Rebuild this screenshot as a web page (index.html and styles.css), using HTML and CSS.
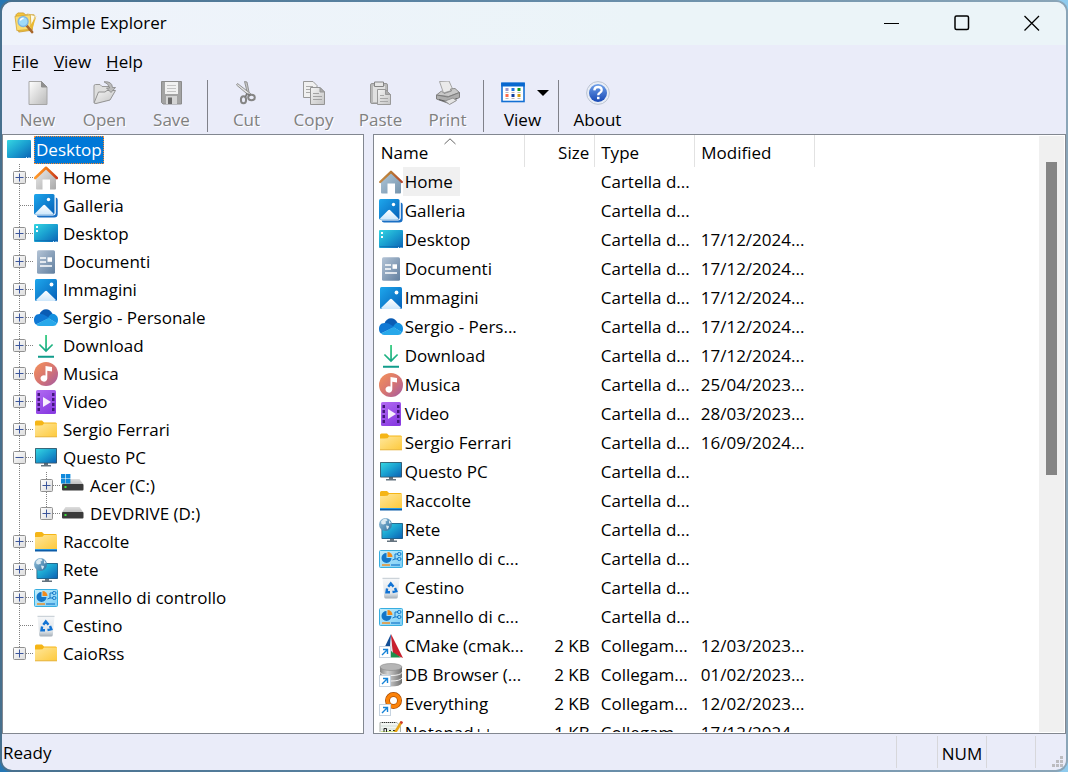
FILE: index.html
```html
<!DOCTYPE html>
<html lang="en">
<head>
<meta charset="utf-8">
<title>Simple Explorer</title>
<link rel="stylesheet" href="styles.css">
</head>
<body>
<svg class="sprite" aria-hidden="true">
  <defs>
    <linearGradient id="g-roof" x1="0" x2="1"><stop offset="0" stop-color="#ff9a2e"/><stop offset=".5" stop-color="#f07818"/><stop offset="1" stop-color="#c9391c"/></linearGradient>
    <linearGradient id="g-roof2" x1="0" x2="1"><stop offset="0" stop-color="#c58a45"/><stop offset=".5" stop-color="#b87a35"/><stop offset="1" stop-color="#b5472c"/></linearGradient>
    <linearGradient id="g-wall" x1="0" x2="1" y2="1"><stop offset="0" stop-color="#ececec"/><stop offset="1" stop-color="#a8a8a8"/></linearGradient>
    <linearGradient id="g-wall2" x1="0" x2="1" y2="1"><stop offset="0" stop-color="#b0c8da"/><stop offset="1" stop-color="#7694ac"/></linearGradient>
    <linearGradient id="g-blue" x1="0" x2="1" y2="1"><stop offset="0" stop-color="#1ea7ec"/><stop offset="1" stop-color="#0560b8"/></linearGradient>
    <linearGradient id="g-snow" x2="0" y2="1"><stop offset="0" stop-color="#fff"/><stop offset="1" stop-color="#cfe8fb"/></linearGradient>
    <linearGradient id="g-desk" x1="0" x2="1" y2="1"><stop offset="0" stop-color="#35d6e2"/><stop offset=".5" stop-color="#1a9fd0"/><stop offset="1" stop-color="#0b62b4"/></linearGradient>
    <linearGradient id="g-doc" x1="0" x2="1" y2="1"><stop offset="0" stop-color="#b4c4d6"/><stop offset="1" stop-color="#617f9f"/></linearGradient>
    <linearGradient id="g-down" x2="0" y2="1"><stop offset="0" stop-color="#2ccb78"/><stop offset="1" stop-color="#109a8c"/></linearGradient>
    <linearGradient id="g-music" x1="0" x2="1" y2="1"><stop offset="0" stop-color="#f5935a"/><stop offset=".5" stop-color="#d87670"/><stop offset="1" stop-color="#a25aa4"/></linearGradient>
    <linearGradient id="g-video" x1="0" x2=".6" y2="1"><stop offset="0" stop-color="#b26cf2"/><stop offset="1" stop-color="#8a3ce2"/></linearGradient>
    <linearGradient id="g-fold" x1="0" x2="1" y2="1"><stop offset="0" stop-color="#ffe79b"/><stop offset="1" stop-color="#fdc93c"/></linearGradient>
    <linearGradient id="g-globe" x1="0" x2="1" y2="1"><stop offset="0" stop-color="#9cc4dd"/><stop offset="1" stop-color="#2a6f9f"/></linearGradient>
    <linearGradient id="g-panel" x1="0" x2="1" y2="1"><stop offset="0" stop-color="#c2eefc"/><stop offset="1" stop-color="#7ccdf5"/></linearGradient>
    <linearGradient id="g-bin" x2="0" y2="1"><stop offset="0" stop-color="#f6f8fa"/><stop offset=".75" stop-color="#dfe4e8"/><stop offset="1" stop-color="#a3aeb8"/></linearGradient>
    <linearGradient id="g-drive" x2="0" y2="1"><stop offset="0" stop-color="#dedede"/><stop offset="1" stop-color="#bdbdbd"/></linearGradient>
    <linearGradient id="g-cyl" x1="0" x2="1"><stop offset="0" stop-color="#858585"/><stop offset=".35" stop-color="#d2d2d2"/><stop offset="1" stop-color="#707070"/></linearGradient>
    <linearGradient id="g-page" x1="0" x2="1" y2="1"><stop offset="0" stop-color="#fff"/><stop offset="1" stop-color="#b9b9b9"/></linearGradient>
    <linearGradient id="g-gray" x1="0" x2="1" y2="1"><stop offset="0" stop-color="#f4f4f4"/><stop offset="1" stop-color="#c4c4c4"/></linearGradient>
    <linearGradient id="g-help" x2="0" y2="1"><stop offset="0" stop-color="#6fa0ea"/><stop offset="1" stop-color="#1748b4"/></linearGradient>
    <linearGradient id="g-box" x1="0" x2="1" y2="1"><stop offset="0" stop-color="#fff"/><stop offset="1" stop-color="#dcdcdc"/></linearGradient>
  </defs>

  <symbol id="t-plus" viewBox="0 0 27 28">
    <path d="M12.5 0v28M19 13.5h8" class="dots"/>
    <rect x="6.5" y="7.5" width="12" height="12" rx="1" fill="url(#g-box)" stroke="#919191"/>
    <path d="M8.500 13.500h8M12.500 9.500v8" stroke="#3b559b"/>
  </symbol>
  <symbol id="t-minus" viewBox="0 0 27 28">
    <path d="M12.5 0v28M19 13.5h8" class="dots"/>
    <rect x="6.5" y="7.5" width="12" height="12" rx="1" fill="url(#g-box)" stroke="#919191"/>
    <path d="M8.500 13.500h8" stroke="#3b559b"/>
  </symbol>
  <symbol id="t-last" viewBox="0 0 27 28">
    <path d="M12.5 0v8M19 13.5h8" class="dots"/>
    <rect x="6.5" y="7.5" width="12" height="12" rx="1" fill="url(#g-box)" stroke="#919191"/>
    <path d="M8.500 13.500h8M12.500 9.500v8" stroke="#3b559b"/>
  </symbol>
  <symbol id="t-tee" viewBox="0 0 27 28"><path d="M12.5 0v28M13 13.5h14" class="dots"/></symbol>
  <symbol id="t-bar" viewBox="0 0 27 28"><path d="M12.5 0v28" class="dots"/></symbol>

  <symbol id="i-home" viewBox="0 0 24 24">
    <path d="M2 12L12 2.500l10 9.500v10.500a1 1 0 0 1-1 1h-5V13.500H8.500v10H3a1 1 0 0 1-1-1z" fill="url(#g-wall)"/>
    <path d="M1.200 12L12 1.800 22.800 12" fill="none" stroke="url(#g-roof)" stroke-width="2.600" stroke-linecap="round" stroke-linejoin="round"/>
  </symbol>
  <symbol id="i-home-sel" viewBox="0 0 24 24">
    <path d="M2 12L12 2.500l10 9.500v10.500a1 1 0 0 1-1 1h-5V13.500H8.500v10H3a1 1 0 0 1-1-1z" fill="url(#g-wall2)"/>
    <path d="M1.200 12L12 1.800 22.800 12" fill="none" stroke="url(#g-roof2)" stroke-width="2.400" stroke-linecap="round" stroke-linejoin="round"/>
  </symbol>
  <symbol id="i-gallery" viewBox="0 0 24 24">
    <path d="M21.800 3.500q1.900.4 1.900 2.300V20q0 3.500-3.500 3.500H5q-1.800 0-2.500-1.900H18.800q3 0 3-3z" fill="#1a6fc4"/>
    <rect x="0" y="0" width="20.500" height="20.500" rx="1.500" fill="url(#g-blue)"/>
    <path d="M1 19.500l8.200-8.200q1-1 2 0l8.300 8.200q-.4 1-1.500 1H2.500q-1 0-1.500-1z" fill="url(#g-snow)"/>
    <circle cx="14.500" cy="5.500" r="1.700" fill="#fff"/>
  </symbol>
  <symbol id="i-desk" viewBox="0 0 24 24">
    <rect y="2" width="24" height="18" rx="1" fill="url(#g-desk)"/>
    <path d="M1 18.500h22" stroke="#0a5ea8" stroke-opacity=".5"/>
    <path d="M2 4h2v2H2zM2 8h2v2H2z" fill="#fff"/><path d="M19 19h1v1h-1zM21.500 19h1v1h-1z" fill="#bfe6ff"/>
  </symbol>
  <symbol id="i-root" viewBox="0 0 24 24">
    <rect y="2" width="24" height="18" rx="1" fill="url(#g-desk)"/><path d="M19 19h1v1h-1zM21.500 19h1v1h-1z" fill="#bfe6ff"/>
  </symbol>
  <symbol id="i-doc" viewBox="0 0 24 24">
    <rect x="3" y=".3" width="18" height="23.500" rx="1.500" fill="url(#g-doc)"/>
    <path d="M6 8h6M6 12h6M6 16h12" stroke="#fff" stroke-width="1.400"/><rect x="13.500" y="7.300" width="4.500" height="4.500" fill="#fff"/>
  </symbol>
  <symbol id="i-pic" viewBox="0 0 24 24">
    <rect x="1" y="1" width="22" height="22" rx="1.500" fill="url(#g-blue)"/>
    <path d="M2 22l9-8.800q1-1 2 0L22 22q-.5.900-1.500.900h-17q-1 0-1.500-.9z" fill="url(#g-snow)"/>
    <circle cx="17.500" cy="6.500" r="1.900" fill="#fff"/>
  </symbol>
  <symbol id="i-cloud" viewBox="0 0 24 24">
    <path d="M5.500 8.500C7 2 16 1 18.500 8l-4 5z" fill="#0a5cb4"/>
    <path d="M5.500 8C1.500 8 0 11 0 14c0 2 .8 3.500 2 4.500L15.500 12 9.500 8.500Q7.500 7.600 5.500 8z" fill="#0f78d4"/>
    <path d="M18.500 7.800c3.500.2 5.500 2.800 5.500 6.200q0 2-1 3.500L14 12q1.800-4 4.500-4.200z" fill="#1490df"/>
    <path d="M2 18.500L14.500 12l8.600 5.500q-1.300 2.500-4.100 2.500H5.500Q3.500 20 2 18.500z" fill="#28a8ea"/>
  </symbol>
  <symbol id="i-down" viewBox="0 0 24 24">
    <path d="M11.200 1h1.700v14l5.100-5.100 1.200 1.200-7.200 7.200-7.200-7.200L6 9.900l5.200 5.100zM4 21.700h16v2H4z" fill="url(#g-down)"/>
  </symbol>
  <symbol id="i-music" viewBox="0 0 24 24">
    <circle cx="12" cy="12" r="12" fill="url(#g-music)"/>
    <path d="M11.500 4l6.500 1v4.500l-4.700-.8V16.500a3.400 3.200 0 1 1-1.800-2.900z" fill="#fff"/>
  </symbol>
  <symbol id="i-video" viewBox="0 0 24 24">
    <rect x="2" width="20" height="24" rx="1.500" fill="url(#g-video)"/>
    <path d="M3.500 3h2.500v3H3.500zM3.500 8h2.500v3H3.500zM3.500 13h2.500v3H3.500zM3.500 18h2.500v3H3.500zM18 3h2.500v3H18zM18 8h2.500v3H18zM18 13h2.500v3H18zM18 18h2.500v3H18z" fill="#43167c"/>
    <path d="M9 7l8 5-8 5z" fill="#f6effd"/>
  </symbol>
  <symbol id="i-folder" viewBox="0 0 24 24">
    <path d="M1 4q0-1.500 1.500-1.500H8l2 2H21.500Q23 4.500 23 6v8H1z" fill="#f5b516"/>
    <path d="M1 7.500q4.500 0 7.500-.2L10 5.500h13V19H1z" fill="url(#g-fold)"/><path d="M1 18.800h22" stroke="#e6b545"/>
  </symbol>
  <symbol id="i-lib" viewBox="0 0 24 24">
    <path d="M1 3.500Q1 2 2.500 2H8l2 2H21.500Q23 4 23 5.500v8H1z" fill="#f5b516"/>
    <path d="M1 7q4.500 0 7.500-.2L10 5h13V19H1z" fill="url(#g-fold)"/><path d="M1 19h22v2.500H1z" fill="#0c5ca8"/><path d="M1 19h22v1H1z" fill="#2a9be4"/>
  </symbol>
  <symbol id="i-pc" viewBox="0 0 24 24">
    <path d="M10 16h4v3h3v1.500H7V19h3z" fill="#64737f"/>
    <rect x="1" y="2" width="22" height="15.500" rx=".8" fill="#3a5263"/><rect x="1.800" y="2.800" width="20.400" height="13.900" fill="url(#g-desk)"/>
  </symbol>
  <symbol id="i-drive" viewBox="0 0 24 24">
    <path d="M4.500 5h14l4 5.500H1z" fill="url(#g-drive)"/><rect x="1" y="10" width="21.500" height="6.500" rx="1" fill="#3a3a3a"/><rect x="3.500" y="12" width="2" height="2" fill="#3be03b"/>
  </symbol>
  <symbol id="i-windrive" viewBox="0 0 24 24">
    <path d="M4.500 5h14l4 5.500H1z" fill="url(#g-drive)"/><rect x="1" y="10" width="21.500" height="6.500" rx="1" fill="#3a3a3a"/><rect x="3.500" y="12" width="2" height="2" fill="#3be03b"/>
    <path d="M0 0h4.400v4.400H0zM5 0h4.400v4.400H5zM0 5h4.400v4.400H0zM5 5h4.400v4.400H5z" fill="#1089dc"/>
  </symbol>
  <symbol id="i-net" viewBox="0 0 24 24">
    <path d="M11 20h4v2.500h3V24H8v-1.500h3z" fill="#64737f"/>
    <rect x="2.500" y="5" width="21.500" height="16" rx=".8" fill="#245c80"/><rect x="3.300" y="5.800" width="19.900" height="14.400" fill="url(#g-desk)"/>
    <circle cx="6.500" cy="6.500" r="6.500" fill="url(#g-globe)"/>
    <path d="M2 3.500q2-3 5-3l1.500 2-2 1 .5 2-2.500 1-2-.5zM7 7.500l3 .5-.5 2-1.500 1.500zM10 2l2 3-2 .5z" fill="#dceaf2"/>
  </symbol>
  <symbol id="i-cpl" viewBox="0 0 24 24">
    <rect x=".5" y="3.500" width="23" height="17" rx="1" fill="url(#g-panel)" stroke="#38aee0"/>
    <path d="M7.500 6v5h5a5 5 0 1 1-5-5z" fill="#1376c8"/><path d="M8.500 5a5 5 0 0 1 5 5h-5z" fill="#f28b1c"/>
    <path d="M13.500 13l2.500-1V7h3M16 12h3" fill="none" stroke="#1376c8"/><rect x="18.500" y="5.500" width="3.500" height="3" rx="1.500" fill="none" stroke="#1376c8"/><rect x="18.500" y="10.500" width="3.500" height="3" rx="1.500" fill="none" stroke="#1376c8"/>
    <path d="M3 18h8" stroke="#f28b1c" stroke-width="1.400"/><path d="M12 18h9" stroke="#2a86d0" stroke-width="1.400"/>
  </symbol>
  <symbol id="i-bin" viewBox="0 0 24 24">
    <path d="M3.500 2h17L18.800 21q-.2 1.500-1.700 1.500H6.900q-1.500 0-1.700-1.500z" fill="url(#g-bin)"/><path d="M3.500 2.300h17" stroke="#c2cad1"/>
    <path d="M9.300 10.800l2.500-3.300 2.700 3.300M16 12l1.300 3.200-3.800.8M11 16.300H7.500l.6-3.800" fill="none" stroke="#1173d4" stroke-width="2.400"/>
  </symbol>
  <symbol id="i-link" viewBox="0 0 24 24">
    <rect x=".5" y="12.500" width="11" height="11" fill="#fff" stroke="#c6d3e0"/>
    <path d="M3 21l5-5M4 15.500h4.500V20" fill="none" stroke="#1583d8" stroke-width="1.400"/>
  </symbol>
  <symbol id="i-cmake" viewBox="0 0 24 24">
    <path d="M12 0L1 23l10-8.500z" fill="#134f96"/><path d="M12 0l12 24-11-4.500z" fill="#c8202e"/><path d="M1 23.500l10.500-7L22 23.500z" fill="#1d8f4c"/><path d="M12 4l-.8 11 2.800 4z" fill="#e4e6ea"/><use href="#i-link"/>
  </symbol>
  <symbol id="i-db" viewBox="0 0 24 24">
    <path d="M1 4v16q2 3.500 11 3.500T23 20V4z" fill="url(#g-cyl)"/><ellipse cx="12" cy="4" rx="11" ry="3.500" fill="#b5b5b5" stroke="#8a8a8a" stroke-width=".6"/>
    <path d="M1 9.500q2 3 11 3t11-3M1 15q2 3 11 3t11-3" fill="none" stroke="#f4f4f4"/><use href="#i-link"/>
  </symbol>
  <symbol id="i-every" viewBox="0 0 24 24">
    <path d="M9 13l-6 8" stroke="#ef7700" stroke-width="4"/><circle cx="14.500" cy="8.500" r="6" fill="#fff" stroke="#a84e06" stroke-width="5"/><circle cx="14.500" cy="8.500" r="6" fill="none" stroke="#fb8209" stroke-width="3.500"/><use href="#i-link"/>
  </symbol>
  <symbol id="i-npp" viewBox="0 0 24 24">
    <path d="M1 1.500h17l3.500 4V24H1z" fill="#f2f5f2" stroke="#a9afa9"/><path d="M3 1.500h14" stroke="#333" stroke-dasharray="1 1"/><path d="M2 5h17M2 8h17" stroke="#b9cfc2" stroke-width=".6"/>
    <path d="M2 10h14v5H2z" fill="#cfe88a"/><path d="M5 13V7.500h2.500V13M10 9.500h2M14 9.500h2" fill="none" stroke="#222"/><path d="M22.500 1l-8 13" stroke="#e8a312" stroke-width="2.600"/><path d="M23 .5l-1.200 2" stroke="#d03a30" stroke-width="2.600"/>
  </symbol>

  <symbol id="b-new" viewBox="0 0 24 24"><path d="M3 .5h12.500L21 6v17.500H3z" fill="url(#g-page)" stroke="#a6a6a6"/><path d="M15.500.5V6H21z" fill="#8f8f8f" stroke="#8f8f8f"/></symbol>
  <symbol id="b-open" viewBox="0 0 24 24">
    <path d="M1 21.500V5q0-1.500 1.500-1.500H7l2 2h7.500v6" fill="#dedede" stroke="#999"/>
    <path d="M1 22L5.500 11H12l2-1.500h8.500L17 19 3 22.500z" fill="url(#g-gray)" stroke="#929292"/>
    <path d="M11 .800q8-.8 8.500 5.700h3L18 11.500 13.500 7h3Q16 3 11 .8z" fill="#bbb" stroke="#848484" stroke-width=".8"/>
  </symbol>
  <symbol id="b-save" viewBox="0 0 24 24">
    <path d="M1.500.5h20v22.500H3l-1.500-1.500z" fill="#a3a3a3" stroke="#8c8c8c"/><rect x="5" y="1" width="13" height="12" fill="#f1f1f1"/><path d="M7 4.500h9M7 7.500h9M7 10.500h9" stroke="#c4c4c4"/>
    <rect x="6" y="15" width="11" height="8" fill="#d4d4d4"/><rect x="8" y="16.500" width="4" height="6.500" fill="#6c6c6c"/>
  </symbol>
  <symbol id="b-cut" viewBox="0 0 24 24">
    <path d="M9.500.5L12 1l2.500 12.500-1.500 1z" fill="#c7c7c7" stroke="#8a8a8a" stroke-width=".9"/><path d="M1.500 4l1-1.500L16 13l-2 1.500z" fill="#e2e2e2" stroke="#8a8a8a" stroke-width=".9"/>
    <ellipse cx="8.500" cy="18.800" rx="2.600" ry="3.500" fill="none" stroke="#858585" stroke-width="2"/><ellipse cx="16.500" cy="16.500" rx="3.300" ry="2.700" fill="none" stroke="#858585" stroke-width="2"/><path d="M12 12l-1.500 4M13 13l2 1.500" stroke="#777" stroke-width="1.600"/>
  </symbol>
  <symbol id="b-copy" viewBox="0 0 24 24">
    <path d="M1.500.5H11l4 4v12H1.500z" fill="#f0f0f0" stroke="#999"/><path d="M4 5.500h7M4 8.500h5M4 11.500h4" stroke="#aaa"/>
    <path d="M8.500 6.500h9.500l4.500 4.500v12.500h-14z" fill="url(#g-gray)" stroke="#949494"/><path d="M18 6.500V11h4.500z" fill="#aaa" stroke="#949494"/><path d="M11 12.500h6M11 15.500h9M11 18.500h9" stroke="#a2a2a2"/>
  </symbol>
  <symbol id="b-paste" viewBox="0 0 24 24">
    <rect x="1.500" y="2.500" width="17" height="20" rx="1.500" fill="#bababa" stroke="#969696"/><rect x="4" y="5" width="12" height="16" fill="#e0e0e0"/><path d="M5.500 1h9v4.500h-9z" fill="#e6e6e6" stroke="#858585"/>
    <path d="M8.500 8.500h8l5 5v10h-13z" fill="url(#g-gray)" stroke="#999"/><path d="M16.500 8.500v5h5z" fill="#aaa" stroke="#999"/><path d="M11 14.500h4M11 17.500h8M11 20.500h8" stroke="#a8a8a8"/>
  </symbol>
  <symbol id="b-print" viewBox="0 0 24 24">
    <path d="M3.500.500L13 0l4 9-9.500 3z" fill="#eaeaea" stroke="#a5a5a5"/>
    <path d="M.5 14l5-4 2.500 2.500 7.500-2.500-1-2 4.500-.5 4.500 4-11 4z" fill="#c8c8c8" stroke="#8b8b8b"/><path d="M.5 14l11.500 2 11.500-4.500v5L11.500 22l-11-4z" fill="#adadad" stroke="#7d7d7d"/><path d="M3 18.500l9 2.500 9-3.500" stroke="#5e5e5e" fill="none"/><path d="M9 20l8-3 3.500 2.500-7 4z" fill="#e4e4e4" stroke="#929292"/>
  </symbol>
  <symbol id="b-view" viewBox="0 0 24 24">
    <rect x="1" y="2.500" width="22" height="18" fill="#fff" stroke="#1370d4" stroke-width="1.600"/><path d="M.2 1.500h23.600v4H.2z" fill="#0868cf"/>
    <path d="M4.500 7h3v3h-3z" fill="#9a97cc"/><path d="M10.500 7h3v3h-3z" fill="#1d76e0"/><path d="M16.500 7h3v3h-3z" fill="#129b1e"/><path d="M4.500 13h3v3h-3z" fill="#ff6b4a"/><path d="M10.500 13h3v3h-3z" fill="#0e3f9e"/><path d="M16.500 13h3v3h-3z" fill="#d29a0c"/>
    <path d="M4.500 11.500h3m3 0h3m3 0h3M4.500 17.500h3m3 0h3m3 0h3" stroke="#b8b8b8"/>
  </symbol>
  <symbol id="b-help" viewBox="0 0 24 24">
    <circle cx="12" cy="12" r="11.400" fill="#e8edf6" stroke="#bcc4d2"/><circle cx="12" cy="12" r="9" fill="url(#g-help)"/>
    <path d="M8.300 9.300q.3-3.300 3.800-3.300t3.600 3q0 1.700-1.800 2.700-1.700 1-1.700 2.600" fill="none" stroke="#fff" stroke-width="2.300"/><rect x="11" y="15.800" width="2.500" height="2.400" fill="#fff"/>
  </symbol>
  <symbol id="i-app" viewBox="0 0 24 24">
    <path d="M2 4l2-2h6l2 2h9l-2 16-14 2z" fill="#f3c53c" stroke="#c9962a" stroke-width=".8"/><path d="M14 3l8 2-4 14-3-2z" fill="#fdfbe8" stroke="#d4b65a" stroke-width=".7"/><path d="M1 5.500l16-1.500 1 15L3 20.500z" fill="#fbdd72" stroke="#d3a332" stroke-width=".8"/><path d="M23.500 5L19 19l-2.500-3z" fill="#eab830"/>
    <path d="M13 15l6 7" stroke="#a9672a" stroke-width="2.600" stroke-linecap="round"/><circle cx="9.500" cy="11" r="5.200" fill="#9fdbf9" stroke="#7fb3e0" stroke-width="1.400"/><path d="M6.500 10q1-2.500 3.500-2.500" fill="none" stroke="#fff" stroke-width="1.600"/>
  </symbol>
</svg>

<main class="window">
  <div class="frame">
    <header class="titlebar">
      <svg class="app-icon"><use href="#i-app"/></svg>
      <h1>Simple Explorer</h1>
      <div class="captions">
        <button type="button" aria-label="Minimize"><svg viewBox="0 0 16 16"><path d="M0 8.500h15"/></svg></button>
        <button type="button" aria-label="Maximize"><svg viewBox="0 0 16 16"><rect x="1" y="1" width="13.500" height="13.500" rx="1.500" stroke-width="1.500"/></svg></button>
        <button type="button" aria-label="Close"><svg viewBox="0 0 16 16"><path d="M.5 1l14.500 14.500M15 1L.5 15.500" stroke-width="1.300"/></svg></button>
      </div>
    </header>
    <nav class="menubar" aria-label="Menu">
      <button type="button"><u>F</u>ile</button>
      <button type="button"><u>V</u>iew</button>
      <button type="button"><u>H</u>elp</button>
    </nav>
    <div class="toolbar" role="toolbar" aria-label="Toolbar">
      <button type="button" disabled><svg><use href="#b-new"/></svg>New</button>
      <button type="button" disabled><svg><use href="#b-open"/></svg>Open</button>
      <button type="button" disabled><svg><use href="#b-save"/></svg>Save</button>
      <span class="rule"></span>
      <button type="button" disabled><svg><use href="#b-cut"/></svg>Cut</button>
      <button type="button" disabled><svg><use href="#b-copy"/></svg>Copy</button>
      <button type="button" disabled><svg><use href="#b-paste"/></svg>Paste</button>
      <button type="button" disabled><svg><use href="#b-print"/></svg>Print</button>
      <span class="rule"></span>
      <button type="button"><span class="with-arrow"><svg><use href="#b-view"/></svg><svg class="arrow" viewBox="0 0 12 6"><path d="M0 0h12L6 6z"/></svg></span>View</button>
      <span class="rule"></span>
      <button type="button"><svg><use href="#b-help"/></svg>About</button>
    </div>

    <div class="panes">
      <ul class="tree" aria-label="Folders">
        <li><svg class="icon"><use href="#i-root"/></svg><a href="#desktop" class="selected">Desktop</a></li>
        <li><button type="button" aria-label="Expand Home"><svg><use href="#t-plus"/></svg></button><svg class="icon"><use href="#i-home"/></svg><a href="#home">Home</a></li>
        <li><svg class="line"><use href="#t-tee"/></svg><svg class="icon"><use href="#i-gallery"/></svg><a href="#galleria">Galleria</a></li>
        <li><button type="button" aria-label="Expand Desktop"><svg><use href="#t-plus"/></svg></button><svg class="icon"><use href="#i-desk"/></svg><a href="#desktop-folder">Desktop</a></li>
        <li><button type="button" aria-label="Expand Documenti"><svg><use href="#t-plus"/></svg></button><svg class="icon"><use href="#i-doc"/></svg><a href="#documenti">Documenti</a></li>
        <li><button type="button" aria-label="Expand Immagini"><svg><use href="#t-plus"/></svg></button><svg class="icon"><use href="#i-pic"/></svg><a href="#immagini">Immagini</a></li>
        <li><button type="button" aria-label="Expand Sergio - Personale"><svg><use href="#t-plus"/></svg></button><svg class="icon"><use href="#i-cloud"/></svg><a href="#personale">Sergio - Personale</a></li>
        <li><button type="button" aria-label="Expand Download"><svg><use href="#t-plus"/></svg></button><svg class="icon"><use href="#i-down"/></svg><a href="#download">Download</a></li>
        <li><button type="button" aria-label="Expand Musica"><svg><use href="#t-plus"/></svg></button><svg class="icon"><use href="#i-music"/></svg><a href="#musica">Musica</a></li>
        <li><button type="button" aria-label="Expand Video"><svg><use href="#t-plus"/></svg></button><svg class="icon"><use href="#i-video"/></svg><a href="#video">Video</a></li>
        <li><button type="button" aria-label="Expand Sergio Ferrari"><svg><use href="#t-plus"/></svg></button><svg class="icon"><use href="#i-folder"/></svg><a href="#ferrari">Sergio Ferrari</a></li>
        <li><button type="button" aria-label="Collapse Questo PC"><svg><use href="#t-minus"/></svg></button><svg class="icon"><use href="#i-pc"/></svg><a href="#pc">Questo PC</a></li>
        <li><svg class="line"><use href="#t-bar"/></svg><button type="button" aria-label="Expand Acer (C:)"><svg><use href="#t-plus"/></svg></button><svg class="icon"><use href="#i-windrive"/></svg><a href="#c">Acer (C:)</a></li>
        <li><svg class="line"><use href="#t-bar"/></svg><button type="button" aria-label="Expand DEVDRIVE (D:)"><svg><use href="#t-last"/></svg></button><svg class="icon"><use href="#i-drive"/></svg><a href="#d">DEVDRIVE (D:)</a></li>
        <li><button type="button" aria-label="Expand Raccolte"><svg><use href="#t-plus"/></svg></button><svg class="icon"><use href="#i-lib"/></svg><a href="#raccolte">Raccolte</a></li>
        <li><button type="button" aria-label="Expand Rete"><svg><use href="#t-plus"/></svg></button><svg class="icon"><use href="#i-net"/></svg><a href="#rete">Rete</a></li>
        <li><button type="button" aria-label="Expand Pannello di controllo"><svg><use href="#t-plus"/></svg></button><svg class="icon"><use href="#i-cpl"/></svg><a href="#pannello">Pannello di controllo</a></li>
        <li><svg class="line"><use href="#t-tee"/></svg><svg class="icon"><use href="#i-bin"/></svg><a href="#cestino">Cestino</a></li>
        <li><button type="button" aria-label="Expand CaioRss"><svg><use href="#t-last"/></svg></button><svg class="icon"><use href="#i-folder"/></svg><a href="#caiorss">CaioRss</a></li>
      </ul>

      <section class="list" aria-label="Contents">
        <div class="rows">
          <table>
            <colgroup><col class="c-name"><col class="c-size"><col class="c-type"><col class="c-mod"></colgroup>
            <thead><tr><th class="sorted">Name<svg class="caret" viewBox="0 0 12 7"><path d="M.5 6L6 .8 11.500 6"/></svg></th><th class="num">Size</th><th>Type</th><th>Modified</th></tr></thead>
            <tbody>
              <tr><td><span class="item"><svg class="icon"><use href="#i-home-sel"/></svg><span class="current">Home</span></span></td><td></td><td>Cartella d...</td><td></td></tr>
              <tr><td><span class="item"><svg class="icon"><use href="#i-gallery"/></svg><span>Galleria</span></span></td><td></td><td>Cartella d...</td><td></td></tr>
              <tr><td><span class="item"><svg class="icon"><use href="#i-desk"/></svg><span>Desktop</span></span></td><td></td><td>Cartella d...</td><td>17/12/2024...</td></tr>
              <tr><td><span class="item"><svg class="icon"><use href="#i-doc"/></svg><span>Documenti</span></span></td><td></td><td>Cartella d...</td><td>17/12/2024...</td></tr>
              <tr><td><span class="item"><svg class="icon"><use href="#i-pic"/></svg><span>Immagini</span></span></td><td></td><td>Cartella d...</td><td>17/12/2024...</td></tr>
              <tr><td><span class="item"><svg class="icon"><use href="#i-cloud"/></svg><span>Sergio - Pers...</span></span></td><td></td><td>Cartella d...</td><td>17/12/2024...</td></tr>
              <tr><td><span class="item"><svg class="icon"><use href="#i-down"/></svg><span>Download</span></span></td><td></td><td>Cartella d...</td><td>17/12/2024...</td></tr>
              <tr><td><span class="item"><svg class="icon"><use href="#i-music"/></svg><span>Musica</span></span></td><td></td><td>Cartella d...</td><td>25/04/2023...</td></tr>
              <tr><td><span class="item"><svg class="icon"><use href="#i-video"/></svg><span>Video</span></span></td><td></td><td>Cartella d...</td><td>28/03/2023...</td></tr>
              <tr><td><span class="item"><svg class="icon"><use href="#i-folder"/></svg><span>Sergio Ferrari</span></span></td><td></td><td>Cartella d...</td><td>16/09/2024...</td></tr>
              <tr><td><span class="item"><svg class="icon"><use href="#i-pc"/></svg><span>Questo PC</span></span></td><td></td><td>Cartella d...</td><td></td></tr>
              <tr><td><span class="item"><svg class="icon"><use href="#i-lib"/></svg><span>Raccolte</span></span></td><td></td><td>Cartella d...</td><td></td></tr>
              <tr><td><span class="item"><svg class="icon"><use href="#i-net"/></svg><span>Rete</span></span></td><td></td><td>Cartella d...</td><td></td></tr>
              <tr><td><span class="item"><svg class="icon"><use href="#i-cpl"/></svg><span>Pannello di c...</span></span></td><td></td><td>Cartella d...</td><td></td></tr>
              <tr><td><span class="item"><svg class="icon"><use href="#i-bin"/></svg><span>Cestino</span></span></td><td></td><td>Cartella d...</td><td></td></tr>
              <tr><td><span class="item"><svg class="icon"><use href="#i-cpl"/></svg><span>Pannello di c...</span></span></td><td></td><td>Cartella d...</td><td></td></tr>
              <tr><td><span class="item"><svg class="icon"><use href="#i-cmake"/></svg><span>CMake (cmak...</span></span></td><td class="num">2 KB</td><td>Collegam...</td><td>12/03/2023...</td></tr>
              <tr><td><span class="item"><svg class="icon"><use href="#i-db"/></svg><span>DB Browser (...</span></span></td><td class="num">2 KB</td><td>Collegam...</td><td>01/02/2023...</td></tr>
              <tr><td><span class="item"><svg class="icon"><use href="#i-every"/></svg><span>Everything</span></span></td><td class="num">2 KB</td><td>Collegam...</td><td>12/02/2023...</td></tr>
              <tr><td><span class="item"><svg class="icon"><use href="#i-npp"/></svg><span>Notepad++</span></span></td><td class="num">1 KB</td><td>Collegam...</td><td>17/12/2024...</td></tr>
            </tbody>
          </table>
        </div>
        <div class="scrollbar"><div class="thumb"></div></div>
      </section>
    </div>

    <footer class="status">
      <span class="message">Ready</span>
      <span class="cell"></span>
      <span class="cell">NUM</span>
      <span class="cell"></span>
      <span class="cell end"><svg class="grip" viewBox="0 0 11 11"><path d="M8 0h3v3H8zM4 4h3v3H4zM8 4h3v3H8zM0 8h3v3H0zM4 8h3v3H4zM8 8h3v3H8z"/></svg></span>
    </footer>
  </div>
</main>
</body>
</html>
```
FILE: styles.css
```css
* { box-sizing: border-box; }

body {
  margin: 0;
  height: 100vh;
  overflow: hidden;
  background: linear-gradient(to right, #2576b3, #8fcbee);
  font: 17px/24px "Open Sans", "Noto Sans", sans-serif;
  color: #000;
}

button {
  margin: 0;
  padding: 0;
  border: 0;
  background: none;
  font: inherit;
  color: inherit;
}

svg { display: block; flex: none; }
.sprite { position: absolute; width: 0; height: 0; }
.dots { fill: none; stroke: #808080; stroke-dasharray: 1 1; }

.window {
  height: 100%;
  padding: 2px;
  border-radius: 12px;
  background: linear-gradient(to right, #47708e, #5b84a3 40%, #8aa5b8);
}

.frame {
  display: flex;
  flex-direction: column;
  height: 100%;
  overflow: hidden;
  border-radius: 10px;
  background: #eaecf9;
}

.titlebar {
  display: flex;
  align-items: center;
  height: 43px;
  flex: none;
  padding: 0 0 2px 12px;
  gap: 5px;
  background: linear-gradient(to right, #eff3fb, #ebf4f8 60%);
}
.titlebar h1 { margin: 0; font: inherit; }
.app-icon { width: 23px; height: 23px; }
.captions { display: flex; margin-left: auto; }
.captions button { display: grid; place-items: center; width: 70px; height: 41px; padding-left: 1px; }
.captions svg { width: 16px; height: 16px; fill: none; stroke: #000; }

.menubar { display: flex; flex: none; gap: 15px; height: 33px; padding: 5px 10px 4px; }
.menubar u { text-underline-offset: 2px; }

.toolbar { display: flex; flex: none; height: 56px; padding: 2px 2px 2px; }
.toolbar button { display: flex; flex-direction: column; align-items: center; gap: 3px; width: 67px; padding-top: 1px; }
.toolbar button:disabled { color: #808080; text-shadow: 1px 1px 0 #fff; }
.toolbar svg { width: 24px; height: 24px; }
.toolbar .with-arrow { display: flex; align-items: center; gap: 12px; padding-left: 4px; }
.toolbar .arrow { width: 12px; height: 6px; }
.rule { width: 1px; margin: 0 5px 0 2px; background: #80818a; }

.panes { display: flex; flex: 1; min-height: 0; gap: 9px; }
.icon { width: 24px; height: 24px; }

.tree {
  flex: none;
  width: 34%;
  margin: 0;
  padding: 1px 0 0 4px;
  overflow: hidden;
  list-style: none;
  background: #fff;
  border: 1px solid #828790;
}
.tree li { display: flex; align-items: center; height: 28px; }
.tree button svg, .line { width: 27px; height: 28px; }
.tree a { margin-left: 3px; padding: 2px; color: inherit; text-decoration: none; white-space: nowrap; }
.tree .selected { background: #0078d7; color: #fff; outline: 1px dotted #ff8728; outline-offset: -1px; }

.list { display: flex; flex: 1; min-width: 0; padding: 0 1px 1px 0; background: #fff; border: 1px solid #828790; }
.rows { flex: 1; min-width: 0; overflow: hidden; }
table { width: 441px; table-layout: fixed; border-collapse: collapse; }
.c-name { width: 151px; }
.c-size { width: 70px; }
.c-type { width: 100px; }
.c-mod { width: 120px; }
th { position: relative; height: 32px; padding: 3px 5px 0 6px; font-weight: normal; text-align: left; border-right: 1px solid #e2e2e2; }
th.sorted { padding-left: 7px; }
td { height: 29px; padding: 1px 0 0 6px; white-space: nowrap; }
td:first-child { padding: 0 0 0 5px; }
.num { padding-right: 5px; text-align: right; }
.caret { position: absolute; top: 3px; left: calc(50% - 5px); width: 12px; height: 7px; fill: none; stroke: #666; }
.item { display: flex; align-items: center; height: 29px; }
.item span { padding: 3px 7px 2px 2px; }
.item .current { background: #f0f0f0; }

.scrollbar { width: 25px; margin-top: 1px; padding: 26px 7px 21px; background: #f0f0f0; }
.thumb { width: 11px; height: 57%; min-height: 24px; background: #858585; }

.status { display: flex; flex: none; height: 36px; line-height: 38px; }
.message { flex: 1; padding-left: 1px; }
.cell { width: 49px; margin: 2px 0; line-height: 35px; text-align: center; border-left: 1px solid #d7d7db; }
.cell:nth-child(2) { width: 41px; }
.cell.end { display: flex; justify-content: flex-end; align-items: flex-end; width: 31px; padding: 0 3px 1px 0; }
.grip { width: 11px; height: 11px; fill: #bcbcc0; }
```
